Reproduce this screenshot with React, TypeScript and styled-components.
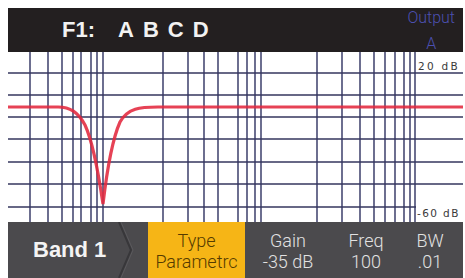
import React from "react";
import styled, { createGlobalStyle } from "styled-components";

const GlobalStyle = createGlobalStyle`
  html, body { margin: 0; padding: 0; background: #ffffff; overflow: hidden; }
  * { box-sizing: border-box; }
`;

const Screen = styled.div`
  width: 465px;
  height: 278px;
  padding: 8px 2px 0 8px;
  display: flex;
  flex-direction: column;
  background: #ffffff;
  font-family: "Liberation Sans", Arial, sans-serif;
`;

const Header = styled.div`
  height: 44px;
  flex: none;
  background: #231f20;
  display: flex;
  align-items: center;
  padding-left: 54px;
  padding-right: 8px;
`;

const Title = styled.div`
  display: flex;
  align-items: center;
  gap: 23px;
  color: #f2f2f2;
  font-weight: 700;
  font-size: 22px;
  line-height: 1;
`;

const Letters = styled.span`
  letter-spacing: 9px;
`;

const Output = styled.div`
  margin-left: auto;
  align-self: stretch;
  display: flex;
  flex-direction: column;
  align-items: center;
  gap: 8px;
  color: #4c50b0;
  font-family: Roboto, "Liberation Sans", sans-serif;
  font-weight: 300;
  font-size: 16px;
  line-height: 18px;
  padding-top: 1px;
`;

const Chart = styled.div`
  height: 170px;
  flex: none;
  background: #ffffff;
  display: flex;
`;

const BottomBar = styled.div`
  height: 56px;
  flex: none;
  display: flex;
  background: #4b4a4d;
`;

const BandCell = styled.div`
  width: 140px;
  display: flex;
  align-items: center;
  padding-left: 25px;
  position: relative;
  color: #f4f4f4;
  font-weight: 700;
  font-size: 22px;
`;

const Chevron = styled.svg`
  position: absolute;
  left: 108px;
  top: 0;
`;

const ParamCell = styled.div<{ $w: number; $active?: boolean }>`
  width: ${(p) => p.$w}px;
  display: flex;
  flex-direction: column;
  align-items: center;
  justify-content: center;
  gap: 2px;
  background: ${(p) => (p.$active ? "#f6b516" : "transparent")};
  color: ${(p) => (p.$active ? "#553b00" : "#e2e2e2")};
  font-family: Roboto, "Liberation Sans", sans-serif;
  font-weight: 300;
  font-size: 18px;
  line-height: 19px;
  padding-top: 2px;
`;

const vLines = [22, 40, 54, 65, 73, 83, 89, 95, 155, 180, 196, 210, 230, 239, 247, 253, 309, 334, 352, 366, 377, 387, 396, 402, 407];
const hLines = [21, 43, 65, 87, 110, 132, 155];

const curve =
  "M0 55 L50 55 C62 55,70 60,77 73 C84 88,90 118,95 152 C99 118,104 88,112 70 C120 56,132 55,150 55 L455 55";

export default function App() {
  return (
    <>
      <GlobalStyle />
      <Screen>
        <Header>
          <Title>
            <span>F1:</span>
            <Letters>ABCD</Letters>
          </Title>
          <Output>
            <span>Output</span>
            <span>A</span>
          </Output>
        </Header>
        <Chart>
          <svg width="455" height="170" viewBox="0 0 455 170">
            {vLines.map((x) => (
              <line key={"v" + x} x1={x} y1={0} x2={x} y2={170} stroke="#2e3160" strokeWidth={1.4} />
            ))}
            {hLines.map((y) => (
              <line key={"h" + y} x1={0} y1={y} x2={455} y2={y} stroke="#34365e" strokeWidth={1.4} />
            ))}
            <path d={curve} fill="none" stroke="#e2283e" strokeWidth={3.2} strokeOpacity={0.88} />
            <rect x={408} y={6} width={47} height={14} fill="#ffffff" />
            <text x={410} y={18} fontFamily="DejaVu Sans, sans-serif" fontSize={10.5} letterSpacing={2.3} fill="#3a3a3a">
              20 dB
            </text>
            <rect x={408} y={153} width={47} height={14} fill="#ffffff" />
            <text x={409} y={165} fontFamily="DejaVu Sans, sans-serif" fontSize={10.5} letterSpacing={1.4} fill="#3a3a3a">
              -60 dB
            </text>
          </svg>
        </Chart>
        <BottomBar>
          <BandCell>
            Band 1
            <Chevron width="20" height="56" viewBox="0 0 20 56">
              <polyline points="3,0 15,28 3,56" fill="none" stroke="#38373a" strokeWidth={2} />
              <polyline points="5,0 17,28 5,56" fill="none" stroke="#5a595c" strokeWidth={1} />
            </Chevron>
          </BandCell>
          <ParamCell $w={97} $active>
            <span>Type</span>
            <span>Parametrc</span>
          </ParamCell>
          <ParamCell $w={86}>
            <span>Gain</span>
            <span>-35 dB</span>
          </ParamCell>
          <ParamCell $w={70}>
            <span>Freq</span>
            <span>100</span>
          </ParamCell>
          <ParamCell $w={58}>
            <span>BW</span>
            <span>.01</span>
          </ParamCell>
        </BottomBar>
      </Screen>
    </>
  );
}
